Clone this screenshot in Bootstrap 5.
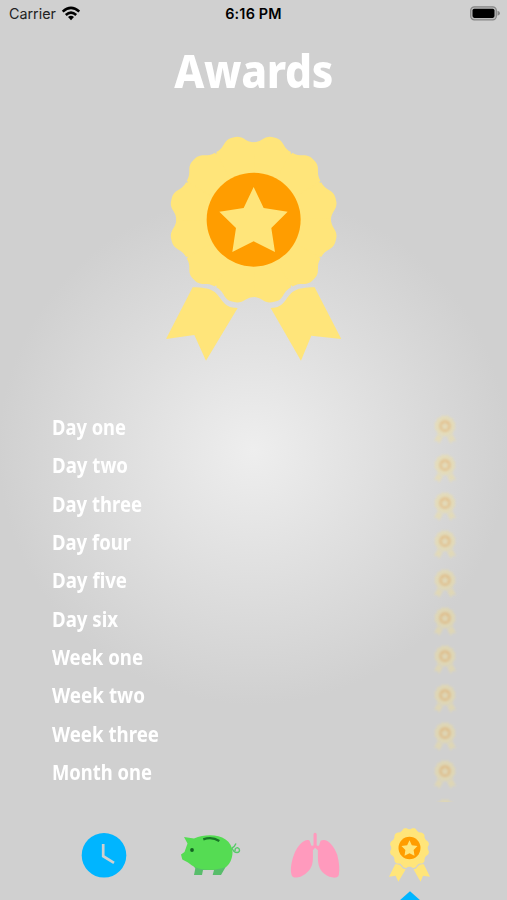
<!DOCTYPE html>
<html lang="en">
<head>
<meta charset="utf-8">
<meta name="viewport" content="width=device-width, initial-scale=1">
<title>Awards</title>
<link href="https://cdn.jsdelivr.net/npm/bootstrap@5.3.0/dist/css/bootstrap.min.css" rel="stylesheet">
<style>
body{height:900px;overflow:hidden;background:radial-gradient(circle 255px at 253px 450px,#eee,#d0d0d0);font-family:Roboto,"Noto Sans",sans-serif}
svg{display:block}
.status{height:28px;padding:0 7px 0 9px;font:14.3px Inter,sans-serif;color:#222}
.status>*{flex:1 1 0}
.status>:first-child{padding-bottom:2px}
.status>:last-child{padding-bottom:1px}
.clock-text{font-weight:600;color:#000;font-size:14.4px;letter-spacing:.2px;padding-bottom:1px;padding-right:2px}
.title{height:88px;padding-top:12px;font-size:47px;line-height:60px;font-weight:800;font-family:"Noto Sans",sans-serif;letter-spacing:-.4px}
.title span{transform:scaleX(.905)}
.hero{margin-top:17.6px;height:273.1px;padding-left:1px}
.awards{height:395px;overflow:hidden;padding:0 51px 0 52px}
.award{height:38.35px;flex:none;font-size:21.5px;font-weight:700;font-family:"Noto Sans",sans-serif}
.award span{transform-origin:left;line-height:38px;white-space:nowrap;padding-top:2px}
.award svg{opacity:.3;filter:blur(.8px);margin-top:8px}
.tabs{height:98px;padding:0 47px 0 53px}
.tabs>div{height:98px;position:relative}
.tab-clock{width:103px}.tab-pig{width:108.7px}.tab-lungs{width:95.3px}.tab-medal{width:100px}
.caret{position:absolute;left:39px;bottom:-1px}
</style>
<script src="https://cdn.jsdelivr.net/npm/bootstrap@5.3.0/dist/js/bootstrap.bundle.min.js"></script>
</head>
<body class="d-flex flex-column text-white m-0">
<svg width="0" height="0" class="position-absolute" aria-hidden="true">
<defs>
<path id="lobe" d="M-60-224C-39-229-34-241-24-248C-15-254-9-254 0-254C9-254 15-254 24-248C34-241 39-229 60-224L0 0Z"/>
<symbol id="medal" viewBox="50 40 526 682" preserveAspectRatio="none">
<g fill="#ffe57a"><g transform="translate(313 297)"><circle r="228"/>
<use href="#lobe" transform="rotate(14)"/><use href="#lobe" transform="rotate(45)"/><use href="#lobe" transform="rotate(76)"/><use href="#lobe" transform="rotate(104)"/><use href="#lobe" transform="rotate(135)"/><use href="#lobe" transform="rotate(166)"/><use href="#lobe" transform="rotate(194)"/><use href="#lobe" transform="rotate(225)"/><use href="#lobe" transform="rotate(256)"/><use href="#lobe" transform="rotate(284)"/><use href="#lobe" transform="rotate(315)"/><use href="#lobe" transform="rotate(346)"/></g>
<path d="M130 500C190 501 197 512 216 537C229 555 241 561 265 562L170 720L135 643L50 655Z"/><path d="M496 500C436 501 429 512 410 537C397 555 385 561 364 562L455 720L486 645L576 655Z"/></g>
<circle cx="313" cy="297" r="141" fill="#ff9d00"/>
<path fill="#ffe57a" d="M313 199L343 262L415 273L366 322L377 394L313 362L249 394L260 322L210 273L283 262Z"/>
</symbol>
</defs></svg>

<header class="status d-flex align-items-center">
<div class="d-flex align-items-center"><span>Carrier</span>
<svg class="ms-1" width="20" height="15" viewBox="-1 0 20 15"><g fill="none" stroke="#000" stroke-width="2.6"><path d="M1.7 5.6Q10-1.8 18.3 5.6"/><path d="M4.8 9Q10 4.4 15.2 9"/></g><path d="M7 11Q10 8.7 13 11L10 14.2Z"/></svg></div>
<div class="clock-text text-center">6:16 PM</div>
<div class="d-flex justify-content-end"><svg width="30" height="15" viewBox="0 0 30 15"><rect x=".7" y=".8" width="25.6" height="13" rx="3.6" fill="#bbb" stroke="#858585" stroke-width="1.2"/><rect x="2.5" y="2.7" width="22" height="9.2" rx="1.8"/><path fill="#858585" d="M27.5 4.7Q30 5.5 30 7.2T27.5 9.8Z"/></svg></div>
</header>
<h1 class="title text-center m-0"><span class="d-inline-block">Awards</span></h1>
<div class="hero d-flex justify-content-center"><svg width="175.3" height="227.3"><use href="#medal"/></svg></div>

<main class="awards d-flex flex-column" id="awards"></main>

<nav class="tabs d-flex">
<div class="tab-clock"><svg width="100" height="98" viewBox="53 802 100 98"><circle cx="104" cy="855.3" r="22.3" fill="#00b5ff"/><path d="M103.2 844V856.2L114 862.8" fill="none" stroke="#d0d0d0" stroke-width="2.7"/></svg></div>
<div class="tab-pig"><svg width="104" height="98" viewBox="156 802 104 98"><path fill="#58bd6b" d="M191 862L195.3 868.5L194 875H202L203 870H214L212.7 875H221L228 863Z"/><path fill="#55dc53" d="M184 837L194 838.5C211 831.5 232 836 232.5 852C232.7 859 229 865 226 867C215 871 200 871 192 865.5L188 862.5L182.3 859.5L181 854.5L184.5 852L187.5 843.5Z"/><path d="M232 848Q234.5 847 236 843.5M232 848Q233.5 852.5 237 852.5C240.5 852 240 848.3 237.5 847.6Q234.5 847.8 235.2 851" fill="none" stroke="#58c96a" stroke-width="1.4"/><path d="M203.3 839.4Q212 836.3 219.3 841" fill="none" stroke="#187626" stroke-width="2.3"/><circle cx="192" cy="850" r="1.9" fill="#126421"/></svg></div>
<div class="tab-lungs"><svg width="100" height="98" viewBox="264.7 802 100 98"><path fill="#ff9abd" d="M313.2 834Q314.8 831.5 316.4 834V845.3C319.2 848 319 843 320.6 840.6C327 837.5 334 846.5 337 855C339 863 339.5 869 338.5 875C337.5 879 330 878.4 324 873.8C318.5 869.5 317.5 863 317.6 857V850.3L314.8 847.7L312.6 850.3V857C312.6 864 311.5 869 305 874C299 878.5 292.5 878.7 291.3 875C289.5 869 291.5 860 294.3 853C297 846.5 303.5 838.5 308.8 840.2C311 842.5 310 847.5 313.2 845.3Z"/></svg></div>
<div class="tab-medal d-flex flex-column align-items-center"><svg class="mt-4" width="41" height="56" viewBox="0 0 41 56"><use href="#medal" y="1.5" width="41" height="54.5"/></svg><svg class="caret" width="22" height="10" viewBox="0 0 22 10"><path fill="#00b5ff" d="M0 10L11 .2L22 10Z"/></svg></div>
</nav>
<script>
const awards = [["Day one",74],["Day two",76],["Day three",90],["Day four",79],["Day five",75],["Day six",66],["Week one",91],["Week two",93],["Week three",107],["Month one",100],["",0]];
const list = document.getElementById("awards");
for (const [name] of awards) {
  list.insertAdjacentHTML("beforeend", `<div class="award d-flex justify-content-between align-items-center"><span>${name}</span><svg width="22" height="29"><use href="#medal"/></svg></div>`);
}
list.querySelectorAll("span").forEach((el, i) => {
  if (awards[i][1]) el.style.transform = `scaleX(${awards[i][1] / el.getBoundingClientRect().width})`;
});
</script>
</body>
</html>
